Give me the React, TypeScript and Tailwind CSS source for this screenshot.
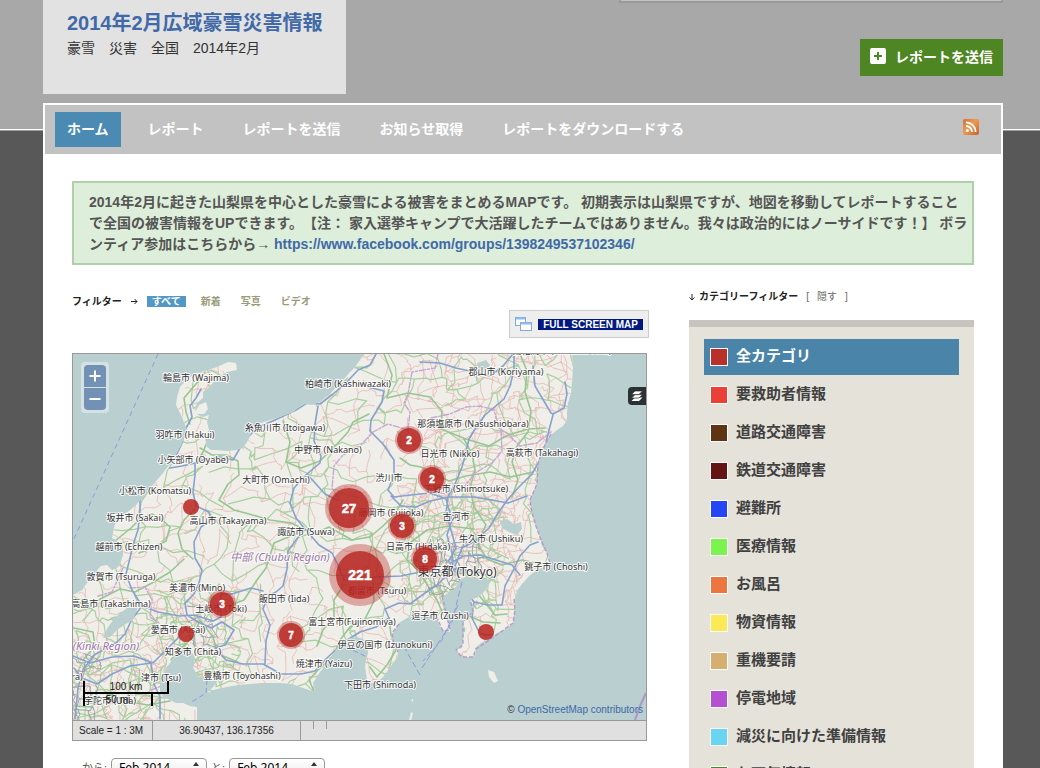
import React from "react";

const FONT = "font-['Liberation_Sans','Noto_Sans_CJK_JP',sans-serif]";

const navItems = ["ホーム", "レポート", "レポートを送信", "お知らせ取得", "レポートをダウンロードする"];

const categories = [
  { name: "全カテゴリ", color: "bg-[#b9302b]" },
  { name: "要救助者情報", color: "bg-[#ea4038]" },
  { name: "道路交通障害", color: "bg-[#5f3413]" },
  { name: "鉄道交通障害", color: "bg-[#631413]" },
  { name: "避難所", color: "bg-[#2645f5]" },
  { name: "医療情報", color: "bg-[#7cf44f]" },
  { name: "お風呂", color: "bg-[#ed753f]" },
  { name: "物資情報", color: "bg-[#fde955]" },
  { name: "重機要請", color: "bg-[#d6ae70]" },
  { name: "停電地域", color: "bg-[#b450d1]" },
  { name: "減災に向けた準備情報", color: "bg-[#69d5f3]" },
  { name: "お天気情報", color: "bg-[#4f8624]" },
];

const LAND =
  "M365 354L362 357L355 367L350 372L343 380L338 385L329 395L320 402L312 405L305 404L298 408L293 412L280 417L267 421L258 424L253 428L250 436L247 442L243 448L237 450L227 451L217 450L211 450L207 447L205 438L209 430L207 422L209 415L203 417L198 415L195 410L197 403L203 398L203 392L210 387L214 381L217 377L222 375L227 372L237 370L236 363L228 362L217 367L208 370L197 373L187 379L180 387L177 397L176 405L182 417L187 430L184 439L180 447L175 456L170 463L163 473L157 480L149 489L143 497L136 505L130 510L122 516L117 520L114 527L112 538L118 541L123 545L123 555L120 564L117 568L112 570L107 565L101 566L97 570L92 579L87 583L82 590L73 595L72 721L197 721L197 707L190 706L183 703L176 703L170 700L163 697L160 690L160 682L163 673L166 668L170 663L174 658L178 655L184 653L190 650L195 657L193 667L198 677L204 676L210 680L220 678L213 687L207 693L217 689L227 687L238 685L250 684L262 683L280 683L292 684L303 688L315 692L313 683L317 677L320 672L326 665L332 657L336 649L342 643L350 638L357 637L363 639L367 643L368 653L366 660L365 667L367 680L375 684L383 677L389 669L393 663L397 658L398 653L394 648L393 643L391 637L393 633L399 623L407 618L417 616L427 615L437 617L439 625L443 630L450 632L450 626L447 620L445 613L443 607L442 600L445 595L453 590L458 584L460 580L466 577L477 578L490 580L488 587L483 593L478 597L470 600L474 606L473 612L468 616L463 623L464 632L463 640L462 648L455 650L459 653L463 657L473 657L476 653L475 648L481 643L487 640L497 633L506 629L513 623L514 615L515 607L514 600L515 597L518 589L523 583L529 576L537 570L545 567L550 565L550 560L547 553L542 546L540 537L535 525L532 513L530 500L534 491L537 483L537 472L538 463L542 450L547 440L551 435L557 430L563 426L567 420L567 412L568 403L571 393L572 383L573 368L572 354Z";

const LAKES = [
  "M138 607L129 607L120 613L114 619L108 627L103 638L110 637L117 630L124 625L133 620Z",
  "M500 521L507 519L514 524L521 522L522 529L517 535L509 532L502 528Z",
  "M477 363L486 360L490 365L486 371L479 370Z",
];

const BLUE = [
  "M201 389L196 398L190 406L192 417L185 430L182 443L175 458L163 470L151 484L140 500L140 512L138 530L133 545L130 558L126 574L132 590L142 606L158 612L180 616L194 615",
  "M170 468L182 466L195 463L205 459L220 457L233 460L240 448L246 440L256 428L275 420L296 410L307 403L320 404L333 394L345 384L358 370L370 365L376 354",
  "M195 463L195 475L193 492L196 506L209 512L211 520L201 527L194 542L195 558L202 570L199 583L194 594L185 603L187 615L198 622L211 628L222 622L234 630L225 645L215 648L226 660L243 664L263 664L281 674L301 674L315 671L327 658L344 642L360 632L376 627L389 618L385 609L399 603L410 604L425 593L437 585L448 574L457 568",
  "M318 406L315 424L314 441L321 456L320 463L307 474L316 484L325 494L337 500M307 474L294 488L290 503L296 518L305 529L296 540L288 551L287 569L283 586L276 592L268 596L263 609L270 625L266 641L265 664",
  "M306 530L319 545L332 553L338 565L344 580L360 580L377 577L401 576L420 572L438 571L450 570",
  "M368 387L384 391L382 402L371 420L370 431L383 444L394 460L394 475L388 490L394 497L411 495L430 493L446 499L452 520L447 535L452 553L453 569",
  "M448 562L456 548L451 530L446 513L448 497L455 484L462 467L465 456L469 439L475 429L485 415L504 399L510 386L514 370L514 354",
  "M533 366L535 386L551 413L553 414L564 408L567 394L565 382M553 415L549 430L545 447L541 458L532 474L519 487L509 498L498 513L489 528L475 541L462 548L455 566",
  "M73 656L90 663L112 657L134 656L153 663L166 650L177 639L184 630M74 668L82 678L97 684L112 674L130 666L151 663M151 663L154 684L160 697L160 719",
  "M142 606L132 619L125 634L116 643L94 655L83 670L78 688L75 718",
  "M391 496L401 506L416 507L430 501L449 497L475 497L508 503L527 496",
  "M456 572L463 587L474 602L488 605L502 605L505 586L514 569L520 556L530 545L538 542M474 602L472 618L480 634L493 635",
  "M450 563L464 556L480 555L496 560L512 565L520 575M451 568L465 570L482 573L494 578",
  "M420 362L440 363L456 368L474 372L490 376L503 366L513 354",
  "M194 615L213 621L221 617L221 594L232 594L251 588L263 591",
];

const MAJOR_GREEN = [
  "M200 448L212 455L226 455L238 461L239 475L228 484L219 500L234 510L249 514L270 520L291 523L306 530",
  "M195 509L184 520L178 533L182 549L193 559",
  "M115 541L131 528L141 518L152 514L162 520L170 527L166 541L153 548L139 553",
  "M283 421L290 442L286 462L301 468L320 461L337 444L348 432L353 422L369 414",
  "M389 618L391 635L396 650L387 665L377 677L370 667",
  "M314 691L309 680L317 671L334 655L340 640L350 627L365 619L374 601L373 580",
  "M344 584L334 600L334 617L323 630L317 646M290 552L312 557L329 556",
  "M384 354L392 375L387 398L408 393L430 397L442 411L441 429L466 439L489 446L508 435L528 429L545 428",
  "M400 458L410 465L421 467L434 474L449 481L466 476L490 472L511 477L533 472",
  "M464 439L472 454L475 470L470 488L474 507L486 525L477 543L487 559L502 565L522 560L541 564",
  "M520 354L527 371L525 392L531 411L528 432L517 446L512 462L518 480L512 497",
  "M403 500L395 514L383 526L370 537L352 540L329 527L316 533",
  "M195 616L212 606L228 606L244 600L257 580L266 568L274 543L298 533",
  "M200 620L193 637L180 649L171 660M200 620L213 637L218 654L238 662",
  "M76 602L90 605L104 597L120 589L135 592L152 583L170 572L184 559",
  "M74 706L91 707L110 694L129 702L148 705L170 701M74 628L93 632L95 646L83 660",
  "M470 584L482 599L495 615L507 614M469 616L483 622L500 623",
  "M407 560L419 571L428 586L437 600L443 614M407 559L411 542L427 530L449 526L474 529",
  "M205 372L196 384L184 398L186 412L190 424M208 440L203 452L196 463",
];

const BORDERS = [
  "M438 354L435 368L412 372L408 394L404 403L410 412L408 430L388 424L373 432L361 445L343 455L334 466L332 488L340 500",
  "M431 418L450 414L466 407L480 406L494 410L499 428L508 434L520 446L537 443L551 432",
  "M123 568L112 592L98 596M130 588L145 587L152 600L150 617L159 623",
  "M501 429L502 451L492 463L475 473L465 486L446 494L431 491",
  "M151 690L164 685L176 684",
];

function makeRandom(seed: number) {
  let state = seed;
  return () => {
    state = (state * 1664525 + 1013904223) % 4294967296;
    return state / 4294967296;
  };
}

// Minor roads: a jittered mesh joined by gentle curves and clipped to the land.
function buildRoads(
  seed: number,
  box: [number, number, number, number],
  step: number,
  keep: number,
) {
  const random = makeRandom(seed);
  const [left, top, right, bottom] = box;
  const cols = Math.ceil((right - left) / step) + 1;
  const rows = Math.ceil((bottom - top) / step) + 1;
  const points: number[][][] = [];
  for (let r = 0; r < rows; r++) {
    const line: number[][] = [];
    for (let c = 0; c < cols; c++) {
      line.push([
        left + c * step + (random() - 0.5) * step * 1.1,
        top + r * step + (random() - 0.5) * step * 1.1,
      ]);
    }
    points.push(line);
  }
  let path = "";
  const join = (a: number[], b: number[]) => {
    if (random() > keep) return;
    const parts = 3;
    path += `M${a[0].toFixed(1)} ${a[1].toFixed(1)}`;
    for (let i = 1; i < parts; i++) {
      const t = i / parts;
      const x = a[0] + (b[0] - a[0]) * t + (random() - 0.5) * step * 0.35;
      const y = a[1] + (b[1] - a[1]) * t + (random() - 0.5) * step * 0.35;
      path += `L${x.toFixed(1)} ${y.toFixed(1)}`;
    }
    path += `L${b[0].toFixed(1)} ${b[1].toFixed(1)}`;
  };
  for (let r = 0; r < rows; r++) {
    for (let c = 0; c < cols; c++) {
      if (c + 1 < cols) join(points[r][c], points[r][c + 1]);
      if (r + 1 < rows) join(points[r][c], points[r + 1][c]);
    }
  }
  return path;
}

const pinkRoads = [
  buildRoads(7, [73, 354, 646, 720], 14, 0.55),
  buildRoads(19, [400, 490, 520, 600], 8, 0.6),
  buildRoads(23, [150, 590, 240, 680], 9, 0.6),
  buildRoads(31, [73, 640, 160, 720], 9, 0.6),
  buildRoads(47, [420, 354, 570, 520], 12, 0.5),
].join("");
const greenRoads = [
  buildRoads(101, [73, 354, 646, 720], 24, 0.6),
  buildRoads(107, [405, 500, 500, 600], 12, 0.65),
  buildRoads(113, [160, 590, 230, 670], 13, 0.6),
  buildRoads(127, [73, 610, 150, 720], 15, 0.6),
].join("");
const grayRoads = [
  buildRoads(211, [432, 540, 475, 590], 7, 0.75),
  buildRoads(223, [73, 655, 92, 720], 8, 0.6),
  buildRoads(227, [182, 610, 212, 640], 8, 0.6),
].join("");

const labels: [string, number, number][] = [
  ["南相馬市 (Minamisoma)", 562, 350],
  ["輪島市 (Wajima)", 196, 377],
  ["柏崎市 (Kashiwazaki)", 348, 383],
  ["郡山市 (Koriyama)", 506, 371],
  ["糸魚川市 (Itoigawa)", 285, 427],
  ["那須塩原市 (Nasushiobara)", 473, 423],
  ["羽咋市 (Hakui)", 185, 434],
  ["中野市 (Nakano)", 328, 449],
  ["日光市 (Nikko)", 450, 453],
  ["高萩市 (Takahagi)", 542, 452],
  ["小矢部市 (Oyabe)", 193, 459],
  ["大町市 (Omachi)", 276, 479],
  ["渋川市", 389, 477],
  ["下野市 (Shimotsuke)", 466, 488],
  ["小松市 (Komatsu)", 155, 490],
  ["坂井市 (Sakai)", 135, 517],
  ["高山市 (Takayama)", 228, 520],
  ["藤岡市 (Fujioka)", 391, 512],
  ["古河市", 456, 516],
  ["諏訪市 (Suwa)", 306, 531],
  ["越前市 (Echizen)", 129, 546],
  ["日高市 (Hidaka)", 418, 546],
  ["牛久市 (Ushiku)", 491, 538],
  ["銚子市 (Choshi)", 556, 566],
  ["敦賀市 (Tsuruga)", 121, 576],
  ["美濃市 (Mino)", 197, 587],
  ["都留市 (Tsuru)", 377, 590],
  ["高島市 (Takashima)", 111, 603],
  ["飯田市 (Iida)", 284, 598],
  ["土岐市 (Toki)", 221, 608],
  ["愛西市 (Aisai)", 178, 629],
  ["逗子市 (Zushi)", 440, 615],
  ["富士宮市(Fujinomiya)", 352, 621],
  ["知多市 (Chita)", 193, 651],
  ["伊豆の国市 (Izunokuni)", 385, 644],
  ["焼津市 (Yaizu)", 324, 663],
  ["津市 (Tsu)", 161, 677],
  ["豊橋市 (Toyohashi)", 242, 675],
  ["下田市 (Shimoda)", 380, 684],
  ["宇陀市 (Uda)", 110, 700],
  ["ra)", 77, 676],
];

const clusters = [
  { n: 2, x: 409, y: 440, r: 12, halo: 14, size: 10 },
  { n: 2, x: 432, y: 479, r: 12, halo: 14, size: 10 },
  { n: 27, x: 349, y: 508, r: 20, halo: 24, size: 13 },
  { n: 3, x: 402, y: 526, r: 12, halo: 14, size: 10 },
  { n: 8, x: 425, y: 559, r: 12, halo: 14, size: 10 },
  { n: 221, x: 360, y: 575, r: 24, halo: 31, size: 14 },
  { n: 3, x: 222, y: 604, r: 12, halo: 14, size: 10 },
  { n: 7, x: 291, y: 635, r: 12, halo: 14, size: 10 },
];
const dots = [
  [191, 507],
  [186, 634],
  [486, 632],
];

function MapDrawing() {
  return (
    <svg
      className="block h-full w-full font-['Noto_Sans','Noto_Sans_CJK_JP',sans-serif]"
      viewBox="73 354 573 366"
      preserveAspectRatio="xMidYMid slice"
      role="img"
      aria-label="地図"
    >
      <defs>
        <clipPath id="land">
          <path d={LAND} />
        </clipPath>
      </defs>
      <rect x="-400" y="-200" width="1600" height="1400" fill="#b9cfd0" />
      <path d={LAND} fill="#f0eee8" />
      <path
        d="M194 414L199 405L206 402L208 409L204 414ZM488 670L494 672L498 681L494 683L489 677ZM409 720L411 712L413 713L411 721ZM411 700L413 699L413 702Z"
        fill="#f0eee8"
      />
      <g clipPath="url(#land)" fill="none" strokeLinejoin="round" strokeLinecap="round">
        <path d={pinkRoads} stroke="#e6b9b5" strokeWidth="0.8" />
        <path d={greenRoads} stroke="#a9cfa0" strokeWidth="1.2" />
        <path d={MAJOR_GREEN.join("")} stroke="#98c692" strokeWidth="1.6" />
        <path d={grayRoads} stroke="#9aa3a8" strokeWidth="1" />
        <path d={BORDERS.join("")} stroke="#c9a5d3" strokeWidth="1.4" strokeDasharray="6 2 2 2" />
        <path d={BLUE.join("")} stroke="#86a2cd" strokeWidth="1.6" />
      </g>
      {LAKES.map((d) => (
        <path key={d} d={d} fill="#b9cfd0" />
      ))}
      <g fill="none" stroke="#b69cc4" strokeWidth="1.4" strokeDasharray="4 2">
        <path d="M551 434L547 441L542 451L538 464L537 484L530 500L532 513L536 526L541 540L547 553L550 563" />
        <path d="M514 599L515 610L513 623L498 634L476 649L473 657L462 657L456 650L463 645L463 622L473 612L470 600" />
        <path d="M442 596L446 612L450 630L443 631L437 618L418 616M399 624L392 633L394 645L398 652" />
      </g>
      <g fill="none" stroke="#8b9ade" strokeWidth="1">
        <path d="M158 354L73 541" strokeDasharray="5 4" />
        <path d="M462 582L457 602L452 622L422 668M420 675L402 643M458 605L442 640L423 661" strokeDasharray="6 3" />
        <path d="M207 680L206 693L190 703" strokeDasharray="5 3" />
        <path d="M346 647L367 657" strokeDasharray="5 3" />
      </g>
      <path d="M635 720L640 706L646 693" fill="none" stroke="#ab98c8" strokeWidth="2" />

      <g
        textAnchor="middle"
        fill="#333333"
        stroke="#ffffff"
        strokeOpacity="0.85"
        strokeWidth="2"
        strokeLinejoin="round"
        paintOrder="stroke"
      >
        {labels.map(([text, x, y]) => (
          <text key={text} x={x} y={y + 4} fontSize="9">
            {text}
          </text>
        ))}
        <text x="457" y="576" fontSize="12">
          東京都 (Tokyo)
        </text>
        <g fill="#9a76a8" fontSize="11" fontStyle="italic">
          <text x="280" y="561">中部 (Chubu Region)</text>
          <text x="106" y="650">(Kinki Region)</text>
        </g>
      </g>

      <g fill="#b8231f" className={FONT}>
        {dots.map(([x, y]) => (
          <circle key={x} cx={x} cy={y} r="8" fillOpacity="0.85" />
        ))}
        {clusters.map((c) => (
          <g key={c.x}>
            <circle cx={c.x} cy={c.y} r={c.halo} fillOpacity="0.35" />
            <circle cx={c.x} cy={c.y} r={c.r} fillOpacity="0.8" />
            <text
              x={c.x}
              y={c.y + Math.round(c.size * 0.36)}
              fontSize={c.size}
              fontWeight="700"
              fill="#ffffff"
              stroke="#ffffff"
              strokeWidth="0.5"
              textAnchor="middle"
            >
              {c.n}
            </text>
          </g>
        ))}
      </g>
    </svg>
  );
}

function ScaleBar() {
  return (
    <div className="absolute bottom-[14px] left-[10px] w-[86px] text-center text-[10px] leading-3 text-[#222]">
      <div className="h-[13px] border-2 border-t-0 border-black">100 km</div>
      <div className="h-3 w-[70px] border-x-2 border-black">50 mi</div>
    </div>
  );
}

function MonthSelect({ id, label }: { id: string; label: string }) {
  return (
    <>
      <label htmlFor={id} className="text-[11px] text-[#555]">
        {label}
      </label>
      <span className="relative">
        <select
          id={id}
          className="block h-5 w-24 appearance-none rounded border border-[#999] bg-linear-to-b from-white to-[#ececec] pl-[7px] font-['Noto_Sans',sans-serif] text-xs leading-4 text-black"
        >
          <option>Feb 2014</option>
        </select>
        <svg className="pointer-events-none absolute top-1 right-1.5 size-2.5" viewBox="0 0 10 10" fill="#333">
          <path d="M5 0L8 4H2ZM5 10L8 6H2Z" />
        </svg>
      </span>
    </>
  );
}

export default function App() {
  return (
    <div
      className={`min-h-screen bg-[#585858] bg-[linear-gradient(to_bottom,#a8a8a8_129px,#ffffff_129px,#ffffff_130px,#9b9b9b_130px,#9b9b9b_131px,#585858_131px)] pr-[37px] pl-[43px] text-[#333] ${FONT}`}
    >
      <div className="mx-auto max-w-[960px]">
        <header className="flex items-start justify-between">
          <div className="h-[94px] w-[303px] bg-[#e2e2e2] pt-2.5 pl-6">
            <h1 className="text-xl leading-[26px] font-bold whitespace-nowrap text-[#4169a8]">
              2014年2月広域豪雪災害情報
            </h1>
            <p className="text-sm leading-6 whitespace-nowrap">豪雪　災害　全国　2014年2月</p>
          </div>
          <div className="flex w-96 flex-col items-end gap-9">
            <div className="h-[3px] w-full border-2 border-t-0 border-[#999] bg-[#c2c2c2]" />
            <a
              href="#submit"
              className="flex h-[37px] items-center gap-[9px] bg-[#4f8624] px-2.5 pb-0.5 text-sm font-bold whitespace-nowrap text-white"
            >
              <svg className="mb-0.5 size-4" viewBox="0 0 16 16">
                <rect width="16" height="16" rx="2" fill="#fff" />
                <path d="M8 4V12M4 8H12" stroke="#4f8624" strokeWidth="2" />
              </svg>
              レポートを送信
            </a>
          </div>
        </header>

        <div className="mt-[9px] bg-white">
          <nav className="flex justify-between border-2 border-b-0 border-white bg-[#c2c2c2] py-[7px] pr-[22px] pl-2.5">
            <ul className="flex gap-[15px]">
              {navItems.map((item, i) => (
                <li key={item}>
                  <a
                    href="#nav"
                    className={`block px-3 pb-px text-sm leading-[34px] font-bold whitespace-nowrap text-white ${i === 0 ? "bg-[#4a8ab3]" : ""}`}
                  >
                    {item}
                  </a>
                </li>
              ))}
            </ul>
            <a href="#rss" aria-label="RSS" className="pt-[7px]">
              <svg className="size-4" viewBox="0 0 16 16" fill="none">
                <defs>
                  <linearGradient id="rss" x1="0" y1="0" x2="1" y2="1">
                    <stop offset="0" stopColor="#d2713c" />
                    <stop offset="0.45" stopColor="#ee9a50" />
                    <stop offset="1" stopColor="#c9622f" />
                  </linearGradient>
                </defs>
                <rect width="16" height="16" rx="2" fill="url(#rss)" />
                <circle cx="4.4" cy="11.6" r="1.5" fill="#fff" />
                <path d="M3 7A6 6 0 0 1 9 13M3 3.4A9.6 9.6 0 0 1 12.6 13" stroke="#fff" strokeWidth="1.8" />
              </svg>
            </a>
          </nav>

          <main className="px-[29px] pt-[27px] pb-6">
            <p className="border-2 border-[#afd0a9] bg-[#ddeeda] pt-[9px] pb-2 pl-[15px] text-sm leading-[21px] font-bold whitespace-nowrap text-[#555] [text-spacing-trim:space-all]">
              2014年2月に起きた山梨県を中心とした豪雪による被害をまとめるMAPです。 初期表示は山梨県ですが、地図を移動してレポートすること
              <br />
              で全国の被害情報をUPできます。【注： 家入選挙キャンプで大活躍したチームではありません。我々は政治的にはノーサイドです！】 ボラ
              <br />
              ンティア参加はこちらから→{" "}
              <a href="https://www.facebook.com/groups/1398249537102346/" className="text-[#4169a8]">
                https://www.facebook.com/groups/1398249537102346/
              </a>
            </p>

            <div className="flex gap-[42px]">
              <section className="min-w-0 flex-1 pt-[31px]">
                <div className="flex items-center text-[10px] leading-[11px] font-bold text-[#9b9b78]">
                  <span className="text-[#222]">フィルター</span>
                  <svg className="mx-[9px] size-[7px]" viewBox="0 0 7 7" fill="none" stroke="#222">
                    <path d="M0 3.5H6M3.5 1L6 3.5L3.5 6" />
                  </svg>
                  <ul className="flex gap-2.5">
                    <li>
                      <a href="#all" className="block bg-[#5198c7] px-[5px] text-white">すべて</a>
                    </li>
                    <li>
                      <a href="#new" className="block px-[5px]">新着</a>
                    </li>
                    <li>
                      <a href="#photo" className="block px-[5px]">写真</a>
                    </li>
                    <li>
                      <a href="#video" className="block px-[5px]">ビデオ</a>
                    </li>
                  </ul>
                </div>

                <div className="-mr-0.5 mt-[3px] flex justify-end">
                  <button
                    type="button"
                    className="flex h-7 items-center gap-1.5 border border-[#ccc] bg-[#eee] px-[5px] text-[10px] font-bold text-white"
                  >
                    <svg className="h-4 w-[17px]" viewBox="0 0 17 16" fill="#fdfdfd" stroke="#8aa8cf">
                      <rect x="0.5" y="1.5" width="10" height="8" />
                      <path d="M1 2.5H10" stroke="#8dbcf0" strokeWidth="2" />
                      <rect x="5.5" y="6.5" width="11" height="8" />
                      <path d="M6 7.5H16" stroke="#8dbcf0" strokeWidth="2" />
                    </svg>
                    <span className="bg-[#00187f] px-[5px] leading-[11px]">FULL SCREEN MAP</span>
                  </button>
                </div>

                <div className="mt-[15px] border border-[#999]">
                  <div className="relative h-[366px] overflow-hidden">
                    <MapDrawing />
                    <div className="absolute top-2 left-2 flex flex-col gap-px rounded bg-white/40 p-[3px]">
                      <button
                        type="button"
                        aria-label="拡大"
                        className="flex h-[22px] w-[22px] items-center justify-center rounded-t bg-[#7390b5]"
                      >
                        <svg className="size-3" viewBox="0 0 12 12" stroke="#fff" strokeWidth="2">
                          <path d="M6 0.5V11.5M0.5 6H11.5" />
                        </svg>
                      </button>
                      <button
                        type="button"
                        aria-label="縮小"
                        className="flex h-[22px] w-[22px] items-center justify-center rounded-b bg-[#7390b5]"
                      >
                        <svg className="size-3" viewBox="0 0 12 12" stroke="#fff" strokeWidth="2">
                          <path d="M0.5 6H11.5" />
                        </svg>
                      </button>
                    </div>
                    <button
                      type="button"
                      aria-label="レイヤー"
                      className="absolute top-[33px] right-0 flex size-[18px] items-center justify-center rounded-l bg-[#2c3233]"
                    >
                      <svg className="h-3 w-3" viewBox="0 0 12 12">
                        <path d="M0.5 11L4 7.6H11.5L8 11Z" fill="#fff" />
                        <path d="M0.5 8L4 4.6H11.5L8 8Z" fill="#fff" stroke="#2c3233" strokeWidth="0.7" />
                        <path d="M0.5 4.6L4 1H11.5L8 4.6Z" fill="#fff" stroke="#2c3233" strokeWidth="0.7" />
                      </svg>
                    </button>
                    <ScaleBar />
                    <p className="absolute right-[3px] bottom-1 text-[10px] leading-3">
                      ©{" "}
                      <a href="https://www.openstreetmap.org/copyright" className="text-[#4169a8]">
                        OpenStreetMap contributors
                      </a>
                    </p>
                  </div>
                  <div className="flex h-5 border-t border-[#999] bg-[#e0e0e0] text-[10px] leading-[19px] text-[#222]">
                    <span className="w-20 border-r border-[#999] pl-1.5">Scale = 1 : 3M</span>
                    <span className="w-[148px] border-r border-[#999] text-center">36.90437, 136.17356</span>
                    <span className="ml-3 h-2 w-3.5 border-x border-[#999]" />
                  </div>
                </div>

                <div className="mt-[17px] flex items-center gap-1 pl-2.5">
                  <MonthSelect id="from" label="から:" />
                  <MonthSelect id="to" label="と:" />
                </div>
              </section>

              <aside className="w-[285px] pt-[26px]">
                <div className="flex items-center text-[10px] leading-3">
                  <svg className="mr-1 h-[7px] w-1.5" viewBox="0 0 6 7" fill="none" stroke="#222">
                    <path d="M3 0V6M0.5 3.5L3 6L5.5 3.5" />
                  </svg>
                  <h2 className="font-bold text-[#222]">カテゴリーフィルター</h2>
                  <a href="#hide" className="ml-2 flex gap-2 text-[#666]">
                    <span>[</span>
                    <span>隠す</span>
                    <span>]</span>
                  </a>
                </div>
                <ul className="mt-[17px] flex flex-col gap-0.5 border-t-[7px] border-[#c7c3be] bg-[#e5e2da] px-[15px] py-3">
                  {categories.map((c, i) => (
                    <li key={c.name}>
                      <a
                        href="#category"
                        className={`flex h-9 items-center gap-2 px-1.5 text-[15px] font-bold ${i === 0 ? "bg-[#4a84a8] text-white" : "text-[#404040]"}`}
                      >
                        <span className={`size-[18px] border border-white ${c.color}`} />
                        <span className="pb-0.5">{c.name}</span>
                      </a>
                    </li>
                  ))}
                </ul>
              </aside>
            </div>
          </main>
        </div>
      </div>
    </div>
  );
}
